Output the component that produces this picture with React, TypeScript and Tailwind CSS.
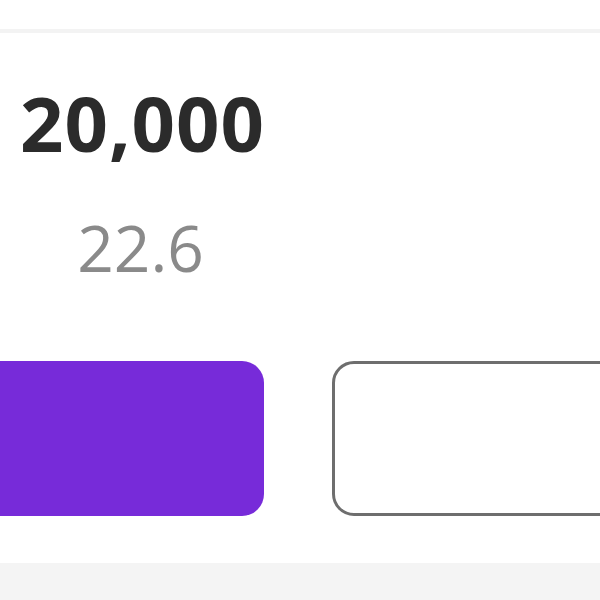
import React from 'react';

const Stat: React.FC<{ value: string; sub: string }> = ({ value, sub }) => (
  <div className="flex flex-col items-center pl-[21px]">
    <div className="text-[76px] font-bold leading-none text-[#2b2b2b] tracking-[1px]">{value}</div>
    <div className="mt-[55px] mr-[4px] text-[64px] font-normal leading-none text-[#8a8a8a]">{sub}</div>
  </div>
);

export default function App() {
  return (
    <div
      className="w-[600px] h-[600px] overflow-hidden bg-white flex flex-col"
      style={{ fontFamily: '"Open Sans", "Liberation Sans", sans-serif' }}
    >
      <div className="h-[29px] shrink-0" />
      <div className="h-[4px] shrink-0 bg-[#f3f3f3]" />

      {/* stat + actions */}
      <div className="flex-1 flex flex-col">
        <div className="w-[264px] pt-[52px]">
          <Stat value="20,000" sub="22.6" />
        </div>

        <div className="flex gap-[68px] mt-[81px]">
          <button className="w-[264px] h-[155px] shrink-0 rounded-r-[22px] bg-[#772bd9]" />
          <button className="w-[320px] h-[155px] shrink-0 rounded-[22px] border-[3px] border-[#6e6e6e] bg-white" />
        </div>
      </div>

      <div className="h-[37px] shrink-0 bg-[#f4f4f4]" />
    </div>
  );
}
